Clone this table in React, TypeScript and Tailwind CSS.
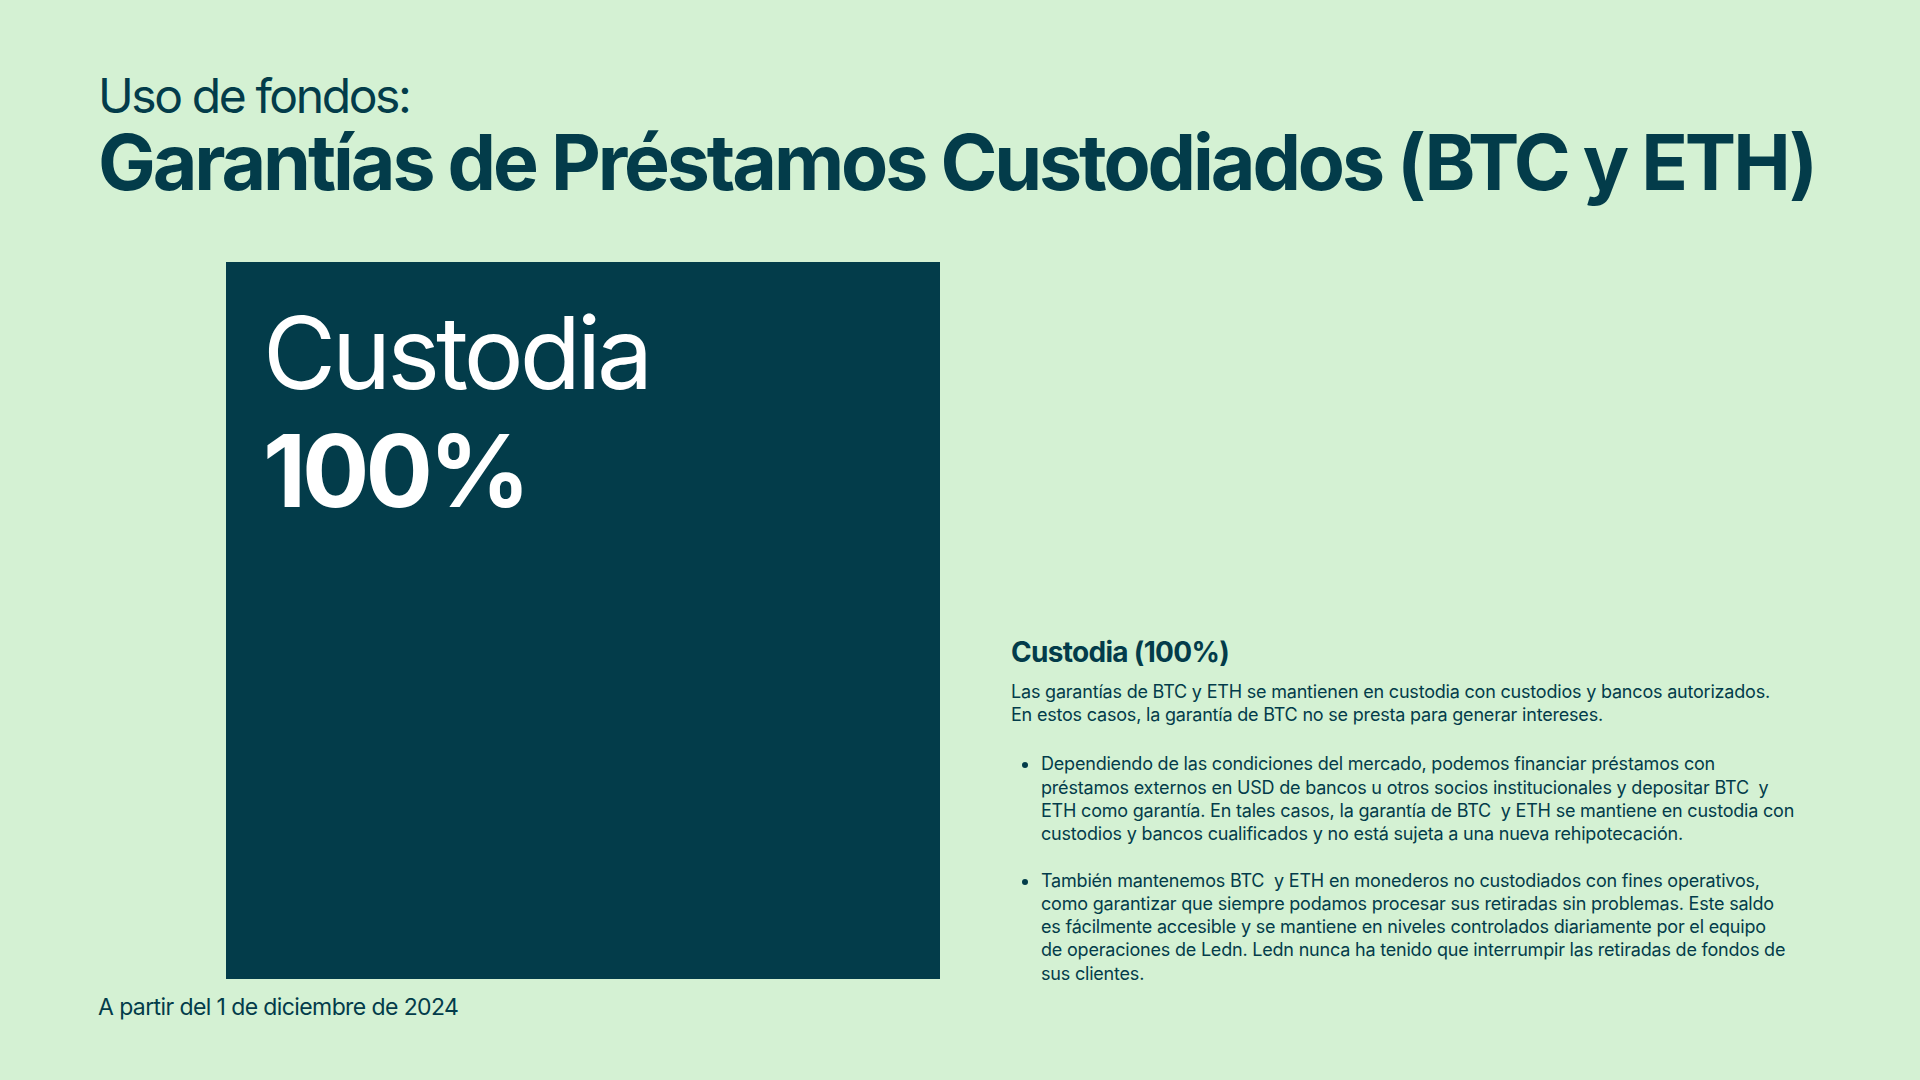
const bullets = [
  [
    'Dependiendo de las condiciones del mercado, podemos financiar préstamos con',
    'préstamos externos en USD de bancos u otros socios institucionales y depositar BTC\u00a0 y',
    'ETH como garantía. En tales casos, la garantía de BTC\u00a0 y ETH se mantiene en custodia con',
    'custodios y bancos cualificados y no está sujeta a una nueva rehipotecación.',
  ],
  [
    'También mantenemos BTC\u00a0 y ETH en monederos no custodiados con fines operativos,',
    'como garantizar que siempre podamos procesar sus retiradas sin problemas. Este saldo',
    'es fácilmente accesible y se mantiene en niveles controlados diariamente por el equipo',
    'de operaciones de Ledn. Ledn nunca ha tenido que interrumpir las retiradas de fondos de',
    'sus clientes.',
  ],
]

export default function App() {
  return (
    <div className="w-[1920px] h-[1080px] overflow-hidden bg-[#d4f1d3] text-[#033c4a] font-['Inter','Liberation_Sans',sans-serif] pl-[98px] pt-[72px]">
      <h2 className="text-[48px] leading-none font-normal tracking-[-2.4px]">Uso de fondos:</h2>
      <h1 className="mt-[4px] text-[77px] leading-none font-bold tracking-[-3.1px] whitespace-nowrap">
        Garantías de Préstamos Custodiados (BTC y ETH)
      </h1>

      <div className="mt-[61px] ml-[128px] flex items-end">
        <div className="w-[714px] h-[717px] shrink-0 bg-[#033c4a] pl-[37px] pt-[41px] text-white">
          <div className="text-[100px] leading-none font-normal tracking-[-4px]">Custodia</div>
          <div className="mt-[18px] text-[100px] leading-none font-bold tracking-[-4px]">100%</div>
        </div>

        <div className="ml-[71px] mb-[-6px] w-[800px] tracking-[-0.2px]">
          <h3 className="text-[28px] leading-none font-bold tracking-[-0.7px]">Custodia (100%)</h3>
          <p className="mt-[14px] text-[18px] leading-[23.3px]">
            Las garantías de BTC y ETH se mantienen en custodia con custodios y bancos autorizados.
            <br />
            En estos casos, la garantía de BTC no se presta para generar intereses.
          </p>
          <ul className="mt-[26px] flex flex-col gap-[23px]">
            {bullets.map((lines, i) => (
              <li key={i} className="flex text-[18px] leading-[23.3px]">
                <span className="mt-[10px] ml-[11px] mr-[13px] w-[6px] h-[6px] shrink-0 rounded-full bg-[#033c4a]" />
                <span>
                  {lines.map((l, j) => (
                    <span key={j} className="block whitespace-nowrap">{l}</span>
                  ))}
                </span>
              </li>
            ))}
          </ul>
        </div>
      </div>

      <p className="mt-[17px] text-[23px] leading-none tracking-[-0.6px]">A partir del 1 de diciembre de 2024</p>
    </div>
  )
}
